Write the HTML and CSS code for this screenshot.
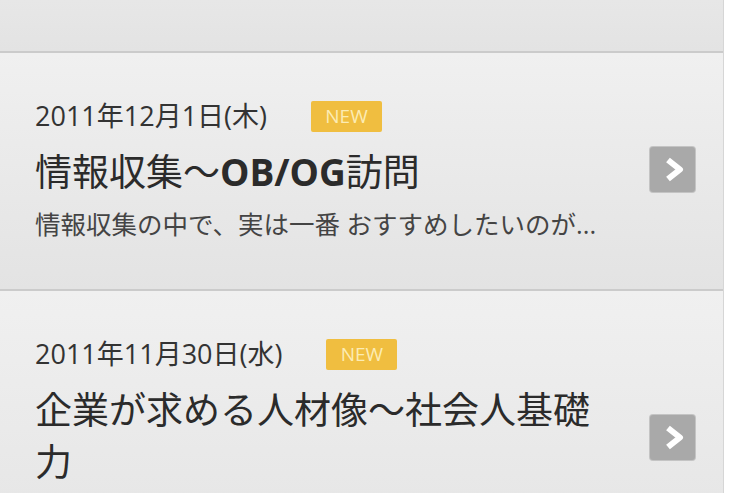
FILE: index.html
```html
<!DOCTYPE html>
<html lang="ja">
<head>
    <meta charset="UTF-8">
    <meta name="viewport" content="width=device-width, initial-scale=1.0">
    <title>お知らせ</title>
    <link rel="stylesheet" href="styles.css">
</head>
<body>
    <ul class="news-list">
        <li class="news-item news-item-cut"></li>
        <li class="news-item">
            <a class="news-link" href="#">
                <div class="news-body">
                    <p class="news-date">2011年12月1日(木)<span class="badge-new">NEW</span></p>
                    <h2 class="news-title">情報収集～<b>OB/OG</b>訪問</h2>
                    <p class="news-desc">情報収集の中で、実は一番 おすすめしたいのが...</p>
                </div>
                <span class="arrow-btn">
                    <svg width="45" height="45" viewBox="0 0 45 45">
                        <polyline points="18,13 30,22.5 18,32" fill="none" stroke="#fff" stroke-width="6" stroke-linejoin="round"/>
                    </svg>
                </span>
            </a>
        </li>
        <li class="news-item">
            <!-- description of this entry is below the fold -->
            <a class="news-link news-link-tall" href="#">
                <div class="news-body">
                    <p class="news-date">2011年11月30日(水)<span class="badge-new">NEW</span></p>
                    <h2 class="news-title">企業が求める人材像～社会人基礎力</h2>
                </div>
                <span class="arrow-btn">
                    <svg width="45" height="45" viewBox="0 0 45 45">
                        <polyline points="18,13 30,22.5 18,32" fill="none" stroke="#fff" stroke-width="6" stroke-linejoin="round"/>
                    </svg>
                </span>
            </a>
        </li>
    </ul>
</body>
</html>
```

FILE: styles.css
```css
body {
    margin: 0;
    background-color: #fff;
    font-family: "Open Sans", "Noto Sans CJK JP", sans-serif;
    color: #333;
    overflow: hidden;
}
.news-list {
    list-style: none;
    margin: 0;
    padding: 0;
    width: 723px;
    border-right: 1px solid #d6d6d6;
}
.news-item {
    background: linear-gradient(#f0f0f0, #e3e3e3);
    border-bottom: 2px solid #cbcbcb;
}
.news-item-cut {
    height: 51px;
    background: linear-gradient(#e7e7e7, #e3e3e3);
}
.news-link {
    display: flex;
    align-items: center;
    padding: 45px 28px 49px 35px;
    color: inherit;
    text-decoration: none;
}
.news-link-tall {
    min-height: 202px;
}
.news-body {
    align-self: flex-start;
    width: 570px;
    margin-right: 45px;
}
.news-date {
    margin: 0;
    font-size: 27px;
    line-height: 36px;
    color: #333;
}
.badge-new {
    display: inline-block;
    vertical-align: top;
    margin-left: 44px;
    margin-top: 3px;
    width: 71px;
    height: 31px;
    line-height: 31px;
    text-align: center;
    font-size: 19px;
    background-color: #f0be40;
    color: #fcecb4;
    border-radius: 2px;
}
.news-title {
    margin: 12px 0 0;
    font-size: 37px;
    line-height: 52px;
    font-weight: normal;
    color: #2b2b2b;
}
.news-title b {
    font-weight: bold;
}
.news-desc {
    margin: 10px 0 0;
    font-size: 25.5px;
    line-height: 32px;
    color: #444;
    white-space: nowrap;
}
.arrow-btn {
    flex: none;
    width: 45px;
    height: 45px;
    background-color: #a9a9a9;
    border-radius: 3px;
    box-shadow: 0 0 0 1px #c4c4c4;
}
.arrow-btn svg {
    display: block;
}
```
